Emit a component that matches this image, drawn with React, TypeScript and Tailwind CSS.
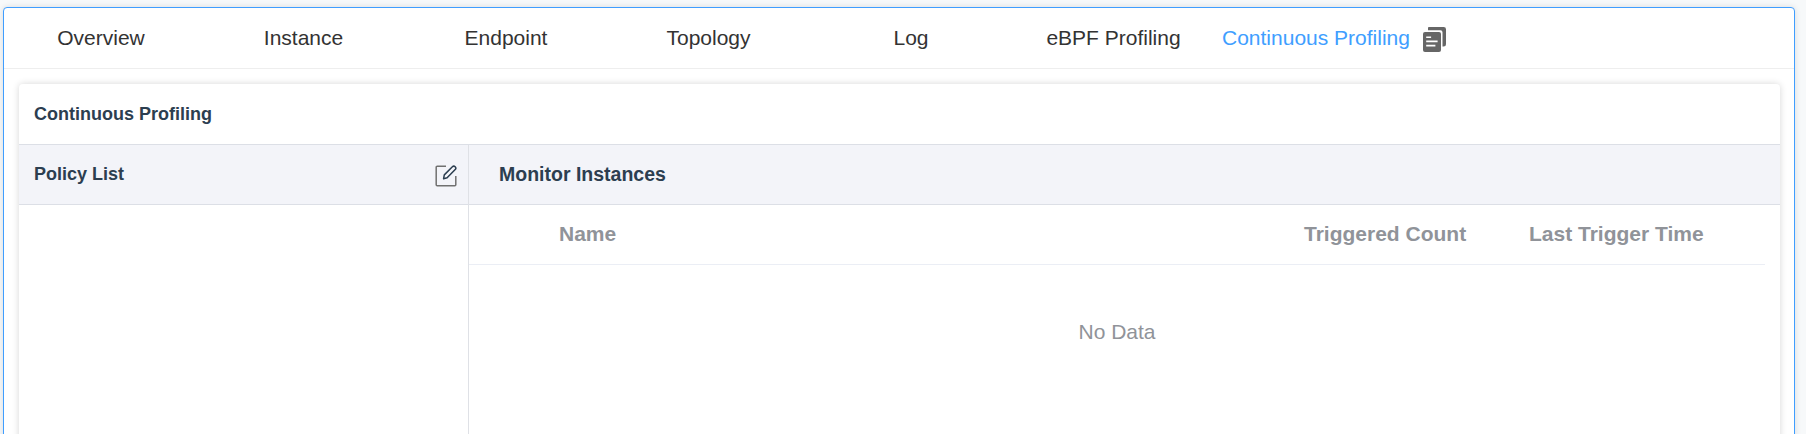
const tabs: string[] = [
  "Overview",
  "Instance",
  "Endpoint",
  "Topology",
  "Log",
  "eBPF Profiling",
  "Continuous Profiling",
];

function CopyIcon() {
  return (
    <svg className="ml-[10px] mt-[19px] h-[26px] w-[24px]" viewBox="0 0 24 26" fill="none">
      <path d="M5.9 0H20.7A2.3 2.3 0 0 1 23 2.3V17.2A2.3 2.3 0 0 1 20.7 19.5H19.5V5.3A2 2 0 0 0 17.5 3.3H5V1A1 1 0 0 1 5.9 0Z" fill="#666666" />
      <rect x="0" y="5" width="18" height="20" rx="2" fill="#666666" />
      <path d="M3.2 10.2H8.1M3.2 14.4H14.6M3.2 18.6H12.4" stroke="#ffffff" strokeWidth="1.6" />
    </svg>
  );
}

function EditIcon() {
  return (
    <svg className="mr-[11px] mt-[3px] h-[22px] w-[22px]" viewBox="0 0 22 22" fill="none">
      <path d="M11 1.2H2.2A1 1 0 0 0 1.2 2.2V19.8A1 1 0 0 0 2.2 20.8H19.8A1 1 0 0 0 20.8 19.8V11" stroke="#707070" strokeWidth="1.5" />
      <path d="M8.6 13.7L9.3 9.9L17.4 1.8A1.75 1.75 0 0 1 20.2 4.5L12.1 12.8Z" stroke="#2c3e50" strokeWidth="1.5" strokeLinejoin="round" />
    </svg>
  );
}

export default function App() {
  return (
    <div className="h-[434px] overflow-hidden bg-[#f7f9fa] pl-[3px] pr-[11px] pt-[7px] font-['Liberation_Sans',Arial,sans-serif] text-[#2c3e50]">
      <div className="h-[450px] rounded-[4px] border border-[#409eff] bg-white shadow-[0_0_6px_rgba(0,0,0,0.12)]">
        <nav className="flex h-[61px] border-b border-[#eeeeee] text-[21px] leading-[59px] text-[#333333]">
          {tabs.map((tab) => (
            <span
              key={tab}
              className={
                tab === "Continuous Profiling"
                  ? "w-[194px] text-center whitespace-nowrap text-[#409eff]"
                  : "mr-[8.5px] w-[194px] text-center whitespace-nowrap"
              }
            >
              {tab}
            </span>
          ))}
          <CopyIcon />
        </nav>
        <section className="mt-[15px] ml-[15px] mr-[14px] h-[380px] overflow-hidden rounded-[4px] bg-white shadow-[0_0_7px_rgba(0,0,0,0.16)]">
          <h1 className="h-[61px] border-b border-[#dcdfe6] pl-[15px] text-[18px] leading-[60px] font-bold">
            Continuous Profiling
          </h1>
          <div className="flex h-[330px]">
            <aside className="w-[450px] border-r border-[#dfe1e6]">
              <div className="flex h-[60px] items-center justify-between border-b border-[#dcdfe6] bg-[#f3f4f9] pl-[15px] text-[18px] font-bold">
                <span>Policy List</span>
                <EditIcon />
              </div>
            </aside>
            <main className="flex-1">
              <h2 className="h-[60px] border-b border-[#dcdfe6] bg-[#f3f4f9] pl-[30px] text-[19.5px] leading-[59px] font-bold">
                Monitor Instances
              </h2>
              <div className="mr-[15px]">
                <div className="flex h-[60px] border-b border-[#ebeef5] text-[21px] leading-[58px] font-bold text-[#909399]">
                  <span className="w-[835px] pl-[90px]">Name</span>
                  <span className="w-[225px]">Triggered Count</span>
                  <span>Last Trigger Time</span>
                </div>
                <p className="pt-[22px] text-center text-[21px] leading-[90px] text-[#909399]">No Data</p>
              </div>
            </main>
          </div>
        </section>
      </div>
    </div>
  );
}
